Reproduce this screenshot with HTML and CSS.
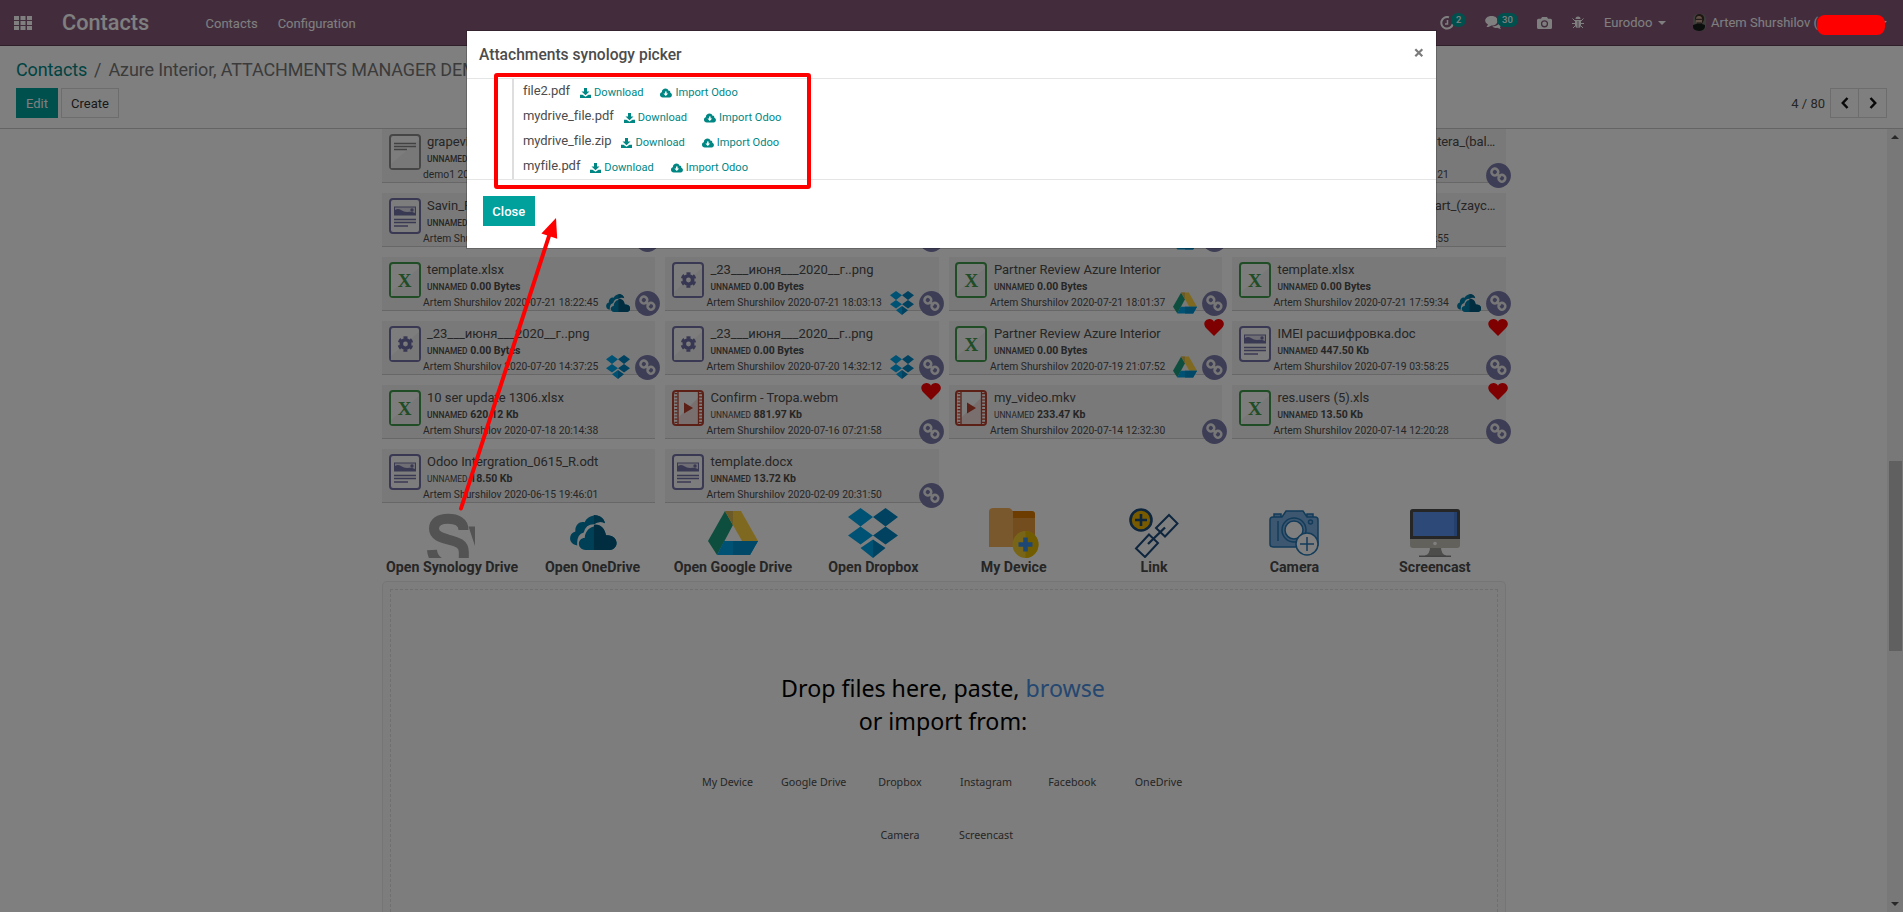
FILE: index.html
```html
<!DOCTYPE html>
<html lang="en">
<head>
<meta charset="utf-8">
<title>Contacts</title>
<link rel="stylesheet" href="styles.css">
</head>
<body>
<svg class="defs" width="0" height="0">
  <symbol id="i-sheet" viewBox="0 0 32 36"><rect x="1" y="1" width="30" height="34" rx="3" fill="#fafafa" stroke="#409a4d" stroke-width="2"/><path d="M2 34V30L30 6V34Z" fill="#f0f0f0"/></symbol>
  <symbol id="i-gear" viewBox="0 0 32 36"><rect x="1" y="1" width="30" height="34" rx="3" fill="#fafafa" stroke="#7472a8" stroke-width="2"/><path d="M2 34V30L30 6V34Z" fill="#f0f0f0"/><g fill="none" stroke="#6f6da6"><circle cx="16.500" cy="18" r="4.200" stroke-width="3.600"/><circle cx="16.500" cy="18" r="6.600" stroke-width="2.400" stroke-dasharray="3.900 3.010" transform="rotate(-107 16.500 18)"/></g></symbol>
  <symbol id="i-doc" viewBox="0 0 32 36"><rect x="1" y="1" width="30" height="34" rx="3" fill="#fafafa" stroke="#7472a8" stroke-width="2"/><rect x="5.500" y="9" width="21" height="8" fill="#dcdce8" stroke="#7472a8"/><path d="M6 12q3-2 6 0t6 2q4-1 8 1v2H6z" fill="#7472a8"/><circle cx="23" cy="12" r="1.700" fill="#7472a8"/><path d="M5 21.500h22M5 24.500h22M5 28h14" stroke="#7472a8" stroke-width="1.700"/></symbol>
  <symbol id="i-text" viewBox="0 0 32 36"><rect x="1" y="1" width="30" height="34" rx="3" fill="#fafafa" stroke="#8c8c8c" stroke-width="2"/><path d="M2 34V30L30 6V34Z" fill="#f0f0f0"/><path d="M5 9.500h22M5 12.500h22M5 15.500h13" stroke="#858585" stroke-width="1.600"/></symbol>
  <symbol id="i-video" viewBox="0 0 32 36"><rect x="1" y="1" width="30" height="34" rx="3" fill="#fafafa" stroke="#b8402f" stroke-width="2"/><path d="M6 34V28L26 8V34Z" fill="#f3dfdd"/><path d="M6 2v32M26.500 2v32" stroke="#b8402f" stroke-width="1.300"/><path d="M4 3v30M28.500 3v30" stroke="#b8402f" stroke-width="3" stroke-dasharray="1.200 2"/><path d="M12 12.500l9 5.500-9 5.500z" fill="#b8402f"/></symbol>
  <symbol id="i-link" viewBox="0 0 25 25"><circle cx="12.500" cy="12.500" r="12.400" fill="#7c7bad"/><g fill="none" stroke="#eee" stroke-width="2.500"><rect x="5.600" y="5.800" width="6.600" height="6.600" rx="3" transform="rotate(40 9 9)"/><rect x="12.600" y="12" width="6.600" height="6.600" rx="3" transform="rotate(40 16 15.300)"/><path d="M10.500 10.500l4 4"/></g></symbol>
  <symbol id="i-heart" viewBox="0 0 20 17"><path d="M10 17L2 9C-1 5.500 0 1 4.500.2 7-.2 9 1 10 2.700 11-.1 15-.7 17.500.8 20.500 3 20.500 6.500 18 9z" fill="#f00"/></symbol>
  <symbol id="i-onedrive" viewBox="0 0 50 40"><path d="M8 34C-2 33-2 21 6 19 5 12 11 7 16 9 20-1 36-1 38 10q-7-3-12 1-9 0-11 9-8 2-7 14z" fill="#0080ac"/><path d="M26 1c7 0 11 4 12 9q-5-3-12 1z" fill="#00668c"/><path d="M17 39c-10-1-9-13-1-13 1-16 21-17 23-3 14-1 15 15 4 16z" fill="#0080ac"/><path d="M26 11.500c7-1 12 4 13 11.500 14-1 15 15 4 16H26z" fill="#005a80"/></symbol>
  <symbol id="i-gdrive" viewBox="0 0 50 44"><path d="M17 0l8 14L9 44 0 30z" fill="#1c9d7c"/><path d="M17 0h16l17 30H34z" fill="#ffd340"/><path d="M17 0h8v14z" fill="#d9b452"/><path d="M16 30h34l-8 14H9z" fill="#00a5e8"/><path d="M25 30h25l-8 14H25z" fill="#0090cf"/></symbol>
  <symbol id="i-dropbox" viewBox="0 0 50 50"><path d="M12.500 0L25 9 12.500 18.500 0 9zM0 27.500l12.500-9 12.500 9-12.500 9zM25 31.500v18.500L12.500 40z" fill="#00a5e8"/><path d="M37.500 0L50 9 37.500 18.500 25 9zM25 27.500l12.500-9 12.500 9-12.500 9zM25 31.500L37.500 40 25 50z" fill="#0084c0"/></symbol>
  <symbol id="i-download" viewBox="0 0 11 10"><path d="M4 0h3v3.500h2.500L5.500 7.200 1.500 3.500H4zM0 6.700h2.500l3 2 3-2H11V10H0z" fill="#008784"/></symbol>
  <symbol id="i-cloud" viewBox="0 0 12 10"><path d="M2.800 9.500C-.8 9.300-.8 5 1.800 4.300 1.700.2 7.500-.8 8.500 2.800 10.300 2.500 10.500 4 10.200 4.800c2.600.7 2.200 4.600-.6 4.700z" fill="#008784"/><path d="M5 3.500h1.600v2H8.200L5.800 8 3.400 5.500H5z" fill="#fff"/></symbol>
</svg>

<header class="navbar">
  <svg class="apps" viewBox="0 0 18 14"><path d="M0 0h5v4H0zM6.500 0h5v4h-5zM13 0h5v4h-5zM0 5h5v4H0zM6.500 5h5v4h-5zM13 5h5v4h-5zM0 10h5v4H0zM6.500 10h5v4h-5zM13 10h5v4h-5z" fill="#fff"/></svg>
  <span class="brand">Contacts</span>
  <nav class="menu"><span>Contacts</span><span>Configuration</span></nav>
  <div class="systray">
    <span class="tray clock"><svg width="14" height="14" viewBox="0 0 14 14" fill="none" stroke="#fff" stroke-width="2"><path d="M9 1.300A5.800 5.800 0 1 0 12.800 8"/><path d="M7.500 4v4H5" stroke-width="1.500"/></svg><b class="count">2</b></span>
    <span class="tray chat"><svg width="17" height="14" viewBox="0 0 17 14" fill="#fff"><path d="M6.500 0C15 0 14.500 9.500 6.500 9.500L3.500 11H1.500L3 8.500C-2 6 0 0 6.500 0z"/><path d="M14.500 4c3 2 3 5 .3 7l1.200 2.200-3.800-1.400q-3 .5-5-1.300C12 10.500 15 8 14.500 4z"/></svg><b class="count">30</b></span>
    <svg class="cam" width="15" height="12" viewBox="0 0 15 12" fill="#fff" fill-rule="evenodd"><path d="M1.500 1.800H4L5 0h5l1 1.800h2.500A1.500 1.500 0 0 1 15 3.300v7.200a1.500 1.500 0 0 1-1.500 1.500h-12A1.500 1.500 0 0 1 0 10.500V3.300a1.500 1.500 0 0 1 1.500-1.500zM7.500 3.200a3.600 3.600 0 1 0 0 7.200 3.600 3.600 0 0 0 0-7.200zm0 1.300a2.300 2.300 0 1 1 0 4.600 2.300 2.300 0 0 1 0-4.600z"/></svg>
    <svg class="bug" width="12" height="13" viewBox="0 0 12 13" fill="#fff"><path d="M3.500 3a2.500 2.500 0 0 1 5 0zM3 4h6v5q-.5 3-2.600 3V5h-.8v7Q3.500 12 3 9z"/><path d="M.5 2.500L3 5M11.500 2.500L9 5M0 7.500h3M12 7.500H9M1 12l2.500-2.500M11 12L8.500 9.500" stroke="#fff"/></svg>
    <span class="company">Eurodoo</span><i class="caret"></i>
    <svg class="avatar" width="13" height="17" viewBox="0 0 13 17"><rect width="13" height="17" rx="5" fill="#777d74"/><path d="M2 5q0-5 5-5 5 1 4 6L9 10H4z" fill="#3e2d25"/><ellipse cx="6" cy="6" rx="3.200" ry="4" fill="#c1a08e"/><path d="M3 5.300h6M4 9h4" stroke="#2a2020"/><path d="M0 11q6-3 12 0v2q-1 4-6 4-6-.5-6-4z" fill="#151d1b"/></svg>
    <span class="user">Artem Shurshilov (</span><i class="caret end"></i>
  </div>
</header>

<section class="control">
  <div>
    <div class="crumbs"><a>Contacts</a><i>/</i><span>Azure Interior, ATTACHMENTS MANAGER DEMO</span></div>
    <div class="buttons"><button class="btn primary">Edit</button><button class="btn">Create</button></div>
  </div>
  <div class="pager"><span>4 / 80</span><div class="pager-btns"><button><svg width="8" height="12" viewBox="0 0 8 12"><path d="M6.500 1L1.800 6l4.700 5" /></svg></button><button><svg width="8" height="12" viewBox="0 0 8 12"><path d="M1.500 1l4.700 5-4.700 5"/></svg></button></div></div>
</section>

<main class="content">
  <div class="sheet">
    <div class="cards">
      <article class="card"><svg class="ficon"><use href="#i-text"/></svg><h4>grapevi…</h4><p><em>unnamed</em></p><small>demo1 2020</small></article>
      <article class="card"></article>
      <article class="card"></article>
      <article class="card"><h4 class="tail">tera_(bal…</h4><p></p><small class="tail">21</small><svg class="link"><use href="#i-link"/></svg></article>

      <article class="card"><svg class="ficon"><use href="#i-doc"/></svg><h4>Savin_R…</h4><p><em>unnamed</em></p><small>Artem Shurs</small><svg class="link"><use href="#i-link"/></svg></article>
      <article class="card"><svg class="link"><use href="#i-link"/></svg></article>
      <article class="card"><svg class="prov"><use href="#i-gdrive"/></svg><svg class="link"><use href="#i-link"/></svg></article>
      <article class="card"><h4 class="tail">art_(zayc…</h4><p></p><small class="tail">:55</small></article>

      <article class="card"><svg class="ficon"><use href="#i-sheet"/></svg><span class="x">X</span><h4>template.xlsx</h4><p><em>unnamed</em> 0.00 Bytes</p><small>Artem Shurshilov 2020-07-21 18:22:45</small><svg class="prov"><use href="#i-onedrive"/></svg><svg class="link"><use href="#i-link"/></svg></article>
      <article class="card"><svg class="ficon"><use href="#i-gear"/></svg><h4 class="wide">_23___июня___2020__г..png</h4><p><em>unnamed</em> 0.00 Bytes</p><small>Artem Shurshilov 2020-07-21 18:03:13</small><svg class="prov"><use href="#i-dropbox"/></svg><svg class="link"><use href="#i-link"/></svg></article>
      <article class="card"><svg class="ficon"><use href="#i-sheet"/></svg><span class="x">X</span><h4>Partner Review Azure Interior</h4><p><em>unnamed</em> 0.00 Bytes</p><small>Artem Shurshilov 2020-07-21 18:01:37</small><svg class="prov"><use href="#i-gdrive"/></svg><svg class="link"><use href="#i-link"/></svg></article>
      <article class="card"><svg class="ficon"><use href="#i-sheet"/></svg><span class="x">X</span><h4>template.xlsx</h4><p><em>unnamed</em> 0.00 Bytes</p><small>Artem Shurshilov 2020-07-21 17:59:34</small><svg class="prov"><use href="#i-onedrive"/></svg><svg class="link"><use href="#i-link"/></svg></article>

      <article class="card"><svg class="ficon"><use href="#i-gear"/></svg><h4>_23___июня___2020__г..png</h4><p><em>unnamed</em> 0.00 Bytes</p><small>Artem Shurshilov 2020-07-20 14:37:25</small><svg class="prov"><use href="#i-dropbox"/></svg><svg class="link"><use href="#i-link"/></svg></article>
      <article class="card"><svg class="ficon"><use href="#i-gear"/></svg><h4>_23___июня___2020__г..png</h4><p><em>unnamed</em> 0.00 Bytes</p><small>Artem Shurshilov 2020-07-20 14:32:12</small><svg class="prov"><use href="#i-dropbox"/></svg><svg class="link"><use href="#i-link"/></svg></article>
      <article class="card"><svg class="ficon"><use href="#i-sheet"/></svg><span class="x">X</span><h4>Partner Review Azure Interior</h4><p><em>unnamed</em> 0.00 Bytes</p><small>Artem Shurshilov 2020-07-19 21:07:52</small><svg class="prov"><use href="#i-gdrive"/></svg><svg class="link"><use href="#i-link"/></svg><svg class="heart"><use href="#i-heart"/></svg></article>
      <article class="card"><svg class="ficon"><use href="#i-doc"/></svg><h4>IMEI расшифровка.doc</h4><p><em>unnamed</em> 447.50 Kb</p><small>Artem Shurshilov 2020-07-19 03:58:25</small><svg class="link"><use href="#i-link"/></svg><svg class="heart"><use href="#i-heart"/></svg></article>

      <article class="card"><svg class="ficon"><use href="#i-sheet"/></svg><span class="x">X</span><h4>10 ser update 1306.xlsx</h4><p><em>unnamed</em> 620.12 Kb</p><small>Artem Shurshilov 2020-07-18 20:14:38</small></article>
      <article class="card"><svg class="ficon"><use href="#i-video"/></svg><h4>Confirm - Tropa.webm</h4><p><em class="thin">unnamed</em> 881.97 Kb</p><small>Artem Shurshilov 2020-07-16 07:21:58</small><svg class="link"><use href="#i-link"/></svg><svg class="heart"><use href="#i-heart"/></svg></article>
      <article class="card"><svg class="ficon"><use href="#i-video"/></svg><h4>my_video.mkv</h4><p><em class="thin">unnamed</em> 233.47 Kb</p><small>Artem Shurshilov 2020-07-14 12:32:30</small><svg class="link"><use href="#i-link"/></svg></article>
      <article class="card"><svg class="ficon"><use href="#i-sheet"/></svg><span class="x">X</span><h4>res.users (5).xls</h4><p><em>unnamed</em> 13.50 Kb</p><small>Artem Shurshilov 2020-07-14 12:20:28</small><svg class="link"><use href="#i-link"/></svg><svg class="heart"><use href="#i-heart"/></svg></article>

      <article class="card"><svg class="ficon"><use href="#i-doc"/></svg><h4>Odoo Intergration_0615_R.odt</h4><p><em class="thin">unnamed</em> 18.50 Kb</p><small>Artem Shurshilov 2020-06-15 19:46:01</small></article>
      <article class="card"><svg class="ficon"><use href="#i-doc"/></svg><h4>template.docx</h4><p><em>unnamed</em> 13.72 Kb</p><small>Artem Shurshilov 2020-02-09 20:31:50</small><svg class="link"><use href="#i-link"/></svg></article>
    </div>

    <div class="sources">
      <div class="source"><svg viewBox="0 0 50 50"><path d="M36.500 22C36.500 14 30 10.800 21 10.800 12 10.800 7 14.500 7 20.500 7 27.500 14 29.500 21 31.500 31 34 36.800 36 36.800 44V51M5 42Q5.500 50 12 54" fill="none" stroke="#a6a6a6" stroke-width="10"/><path d="M41.500 18.500H48V38z" fill="#a6a6a6"/></svg><b>Open Synology Drive</b></div>
      <div class="source"><svg viewBox="0 0 50 50"><use href="#i-onedrive" y="6" width="50" height="37"/></svg><b>Open OneDrive</b></div>
      <div class="source"><svg viewBox="0 0 50 50"><use href="#i-gdrive" y="3" width="50" height="44"/></svg><b>Open Google Drive</b></div>
      <div class="source"><svg viewBox="0 0 50 50"><use href="#i-dropbox" width="50" height="50"/></svg><b>Open Dropbox</b></div>
      <div class="source"><svg viewBox="0 0 50 50"><path d="M18 3h25a3 3 0 0 1 3 3v28H18z" fill="#d97900"/><path d="M20 10h26v29H20z" fill="#e89a3c"/><path d="M4 0h15a5 5 0 0 1 5 5v34H0V4a4 4 0 0 1 4-4z" fill="#f5b05c"/><ellipse cx="36.500" cy="36.500" rx="13" ry="13.500" fill="#f2cb30"/><path d="M36.500 23a13 13.500 0 0 1 0 27z" fill="#e3b900"/><path d="M36.500 29.500v14M29.500 36.500h14" stroke="#3d8fe8" stroke-width="4.500"/></svg><b>My Device</b></div>
      <div class="source"><svg viewBox="0 0 50 50" fill="none" stroke="#1c4a7d" stroke-width="2"><circle cx="12" cy="12" r="10.500" fill="#f0b400" stroke-width="2.600"/><path d="M12 6v12M6 12h12" stroke-width="2.600"/><path d="M40 7l8.500 8.500L36 28.500 27 20zM20 26.500l9 8.500-13 14L7 40.500z"/><path d="M19 36l17-16.500" stroke-width="2.400"/></svg><b>Link</b></div>
      <div class="source"><svg viewBox="0 0 50 50" fill="#7aaee0" stroke="#2478b4" stroke-width="1.500"><path d="M5 9V6h7v3M38 9V6h6v3M4 9h9l4-6h17l4 6h8q3 0 3 3v24q0 3-3 3H4q-3 0-3-3V12q0-3 3-3z"/><circle cx="25" cy="22" r="12"/><circle cx="25" cy="22" r="9" fill="#fff"/><circle cx="41.500" cy="14" r="2"/><path d="M9 13v20"/><circle cx="38" cy="36" r="11" fill="#fff"/><path d="M38 29v14M31 36h14" fill="none"/></svg><b>Camera</b></div>
      <div class="source"><svg viewBox="0 0 50 50"><path d="M20 39h11q0 7 5 8.500v1.500H15v-1.500q5-1.500 5-8.500z" fill="#9b9b97"/><path d="M9 47.500h32V49H9z" fill="#858585"/><rect y="1" width="50" height="39" rx="3" fill="#c5c3b9"/><path d="M3 1h44a3 3 0 0 1 3 3v27H0V4a3 3 0 0 1 3-3z" fill="#4c4c4c"/><rect x="3" y="4" width="44" height="24" fill="#5b93ef"/><path d="M44 4h3v24h-3z" fill="#4b80d8"/><circle cx="25" cy="35.500" r="1.800" fill="#fff"/></svg><b>Screencast</b></div>
    </div>

    <div class="dropzone"><div class="dropinner">
      <p class="lead">Drop files here, paste, <a>browse</a><br>or import from:</p>
      <ul class="from"><li>My Device</li><li>Google Drive</li><li>Dropbox</li><li>Instagram</li><li>Facebook</li><li>OneDrive</li><li>Camera</li><li>Screencast</li></ul>
    </div></div>
  </div>
  <div class="scrollbar"><i class="up"></i><div class="thumb"></div><i class="down"></i></div>
</main>

<div class="backdrop"></div>
<div class="modal">
  <div class="modal-head"><h3>Attachments synology picker</h3><svg width="10" height="10" viewBox="0 0 10 10"><path d="M1.300 1.300l7 7M8.300 1.300l-7 7" stroke="#7b7b7b" stroke-width="2.200"/></svg></div>
  <div class="modal-body"><ul class="files">
    <li><span>file2.pdf</span><a><svg class="dl"><use href="#i-download"/></svg>Download</a><a class="imp"><svg class="cl"><use href="#i-cloud"/></svg>Import Odoo</a></li>
    <li><span>mydrive_file.pdf</span><a><svg class="dl"><use href="#i-download"/></svg>Download</a><a class="imp"><svg class="cl"><use href="#i-cloud"/></svg>Import Odoo</a></li>
    <li><span>mydrive_file.zip</span><a><svg class="dl"><use href="#i-download"/></svg>Download</a><a class="imp"><svg class="cl"><use href="#i-cloud"/></svg>Import Odoo</a></li>
    <li><span>myfile.pdf</span><a><svg class="dl"><use href="#i-download"/></svg>Download</a><a class="imp"><svg class="cl"><use href="#i-cloud"/></svg>Import Odoo</a></li>
  </ul></div>
  <div class="modal-foot"><button class="close">Close</button></div>
</div>
<svg class="marks" width="1903" height="912"><rect x="496" y="75" width="313" height="112" rx="1" fill="none" stroke="#f00" stroke-width="4"/><path d="M461 508.500L549 236" stroke="#f00" stroke-width="4" stroke-linecap="round"/><path d="M556 218l1.200 20.800-15.800-5.300z" fill="#f00"/><rect x="1817" y="15" width="68" height="20" rx="8" fill="#f00"/></svg>
</body>
</html>
```
FILE: styles.css
```css
* { box-sizing: border-box; }
body { margin: 0; height: 912px; overflow: hidden; background: #fff; font-family: Roboto, "Noto Sans", sans-serif; font-size: 13px; color: #4c4c4c; display: flex; flex-direction: column; }
h3, h4, p, ul { margin: 0; padding: 0; }
ul { list-style: none; }
button { font: inherit; padding: 0; }
.defs { position: absolute; }
.navbar { height: 46px; flex: none; background: #875a7b; border-bottom: 1px solid #5f3f56; color: #fff; display: flex; align-items: center; padding: 0 14px; }
.apps { width: 18px; height: 14px; }
.brand { font-size: 21.700px; font-weight: 500; margin-left: 30px; width: 143.500px; }
.menu { display: flex; gap: 20px; font-size: 13px; padding-top: 1px; }
.systray { margin-left: auto; display: flex; align-items: center; height: 45px; margin-right: 2px; }
.tray { display: flex; position: relative; }
.count { position: absolute; top: -3px; background: #00a09d; border-radius: 8px; height: 14px; line-height: 14px; font-size: 9.500px; font-weight: 500; padding: 0 5px; }
.clock { margin-right: 31px; }
.clock .count { left: 11px; }
.chat { margin-right: 35px; }
.chat .count { left: 12px; }
.cam { margin-right: 20px; }
.bug { margin-right: 20px; }
.company { width: 48px; }
.caret { border: 4px solid transparent; border-top-color: #fff; border-bottom: 0; margin-left: 6px; }
.avatar { margin: 0 5px 0 27px; }
.user { width: 108px; }
.caret.end { margin-left: 60px; }
.control { height: 83px; flex: none; border-bottom: 1px solid #c8c8c8; padding: 13px 16px 0; display: flex; justify-content: space-between; }
.crumbs { font-size: 18px; line-height: 22px; letter-spacing: -.14px; white-space: nowrap; color: #777; }
.crumbs a { color: #008784; }
.crumbs i { font-style: normal; margin: 0 7px; }
.buttons { display: flex; gap: 3px; margin-top: 7px; }
.btn { height: 30px; width: 58px; background: #fff; border: 1px solid #dbdbdb; color: #333; }
.btn.primary { width: 42px; background: #00a09d; border-color: #00a09d; color: #fff; }
.pager { display: flex; align-items: center; gap: 5px; height: 30px; margin-top: 29px; }
.pager-btns { display: flex; border: 1px solid #dbdbdb; height: 30px; width: 57px; }
.pager-btns button { flex: 1; border: 0; background: none; display: grid; place-items: center; }
.pager-btns button + button { border-left: 1px solid #dbdbdb; }
.pager-btns path { fill: none; stroke: #111; stroke-width: 2.500; }
.content { flex: 1; display: flex; justify-content: space-between; min-height: 0; }
.sheet { width: 1124px; margin-left: 382px; display: flex; flex-direction: column; }
.cards { display: grid; grid-template-columns: repeat(4, 273.300px); grid-auto-rows: 54px; column-gap: 10.200px; row-gap: 10px; }
.card { position: relative; background: #f2f2f2; border-bottom: 1px solid #cfcfcf; padding: 4px 0 0 45px; display: flex; flex-direction: column; min-width: 0; white-space: nowrap; }
.ficon { position: absolute; left: 6.500px; top: 5px; width: 32px; height: 36px; }
.x { position: absolute; left: 6.500px; top: 13px; width: 32px; text-align: center; font: bold 19px/22px "Liberation Serif", serif; color: #409a4d; }
.card h4 { font-size: 13px; font-weight: 400; line-height: 18px; letter-spacing: -.04px; color: #4c4c4c; }
.card h4.wide { letter-spacing: -.02px; }
.card h4.tail { padding-right: 10.500px; text-align: right; letter-spacing: -.08px; }
.card small.tail { padding-right: 57px; text-align: right; }
.card p { font-size: 10.500px; font-weight: 700; line-height: 16px; height: 16px; }
.card em { font-style: normal; text-transform: uppercase; font-size: 8.400px; font-weight: 500; }
.card em.thin { font-weight: 400; }
.card small { font-size: 10.300px; line-height: 15px; margin-left: -4px; }
.prov { position: absolute; right: 25px; bottom: -5px; width: 24px; height: 24px; }
.link { position: absolute; right: -5px; bottom: -6px; width: 25px; height: 25px; }
.heart { position: absolute; right: -2px; top: -2px; width: 20px; height: 17px; }
.sources { display: grid; grid-template-columns: repeat(8, 1fr); margin: 5px 1px 0 0; height: 73px; }
.source { display: flex; flex-direction: column; align-items: center; white-space: nowrap; }
.source svg { width: 50px; height: 50px; }
.source b { font-size: 14.200px; font-weight: 700; line-height: 18px; }
.dropzone { flex: 1; border: 1px solid #eaeaea; border-bottom: 0; border-radius: 5px 5px 0 0; background: #fafafa; padding: 7px 7px 0; min-height: 0; }
.dropinner { height: 100%; border: 1px dashed #dfdfdf; border-bottom: 0; padding: 82px 2px 0 0; display: flex; flex-direction: column; align-items: center; font-family: "Noto Sans", sans-serif; }
.lead { font-size: 23.200px; line-height: 33px; text-align: center; color: #000; }
.lead a { color: #4a90e2; }
.from { margin-top: 29px; display: flex; flex-wrap: wrap; justify-content: center; width: 518px; }
.from li { width: 86.200px; height: 53px; line-height: 30px; font-size: 10.700px; text-align: center; color: #4c4c4c; }
.scrollbar { width: 16px; background: #f1f1f1; display: flex; flex-direction: column; align-items: center; padding: 6px 0; }
.up, .down { border: 4px solid transparent; }
.up { border-top: 0; border-bottom-color: #505050; }
.down { border-bottom: 0; border-top-color: #505050; margin-top: auto; }
.thumb { width: 13px; height: 190px; background: #c1c1c1; margin-top: 322px; }
.backdrop { position: absolute; inset: 0; background: rgba(0, 0, 0, .5); }
.modal { position: absolute; left: 467px; top: 31px; width: 969px; height: 217px; background: #fff; box-shadow: 0 0 0 1px rgba(0, 0, 0, .2); }
.modal-head { height: 48px; border-bottom: 1px solid #e5e5e5; padding: 0 12px; display: flex; justify-content: space-between; align-items: center; }
.modal-head h3 { font-size: 15.600px; font-weight: 500; }
.modal-head svg { margin-top: -3px; }
.modal-body { height: 101px; border-bottom: 1px solid #e5e5e5; padding-left: 45px; }
.files { border-left: 2px solid #dedede; padding-left: 9px; }
.files li { height: 25px; display: flex; line-height: 23px; }
.files span { font-size: 13px; letter-spacing: -.06px; }
.files a { color: #008784; font-size: 11.100px; line-height: 29px; height: 27px; margin-left: 10px; display: flex; align-items: center; }
.files a.imp { margin-left: 17px; }
.dl { width: 11px; height: 10px; margin: 0 3px 0 0; }
.cl { width: 12px; height: 10px; margin: 0 3px 0 0; }
.modal-foot { padding: 16px 15.500px; }
.close { width: 52.500px; height: 30px; border: 0; background: #00a09d; color: #fff; font-weight: 500; }
.marks { position: absolute; left: 0; top: 0; }
```
